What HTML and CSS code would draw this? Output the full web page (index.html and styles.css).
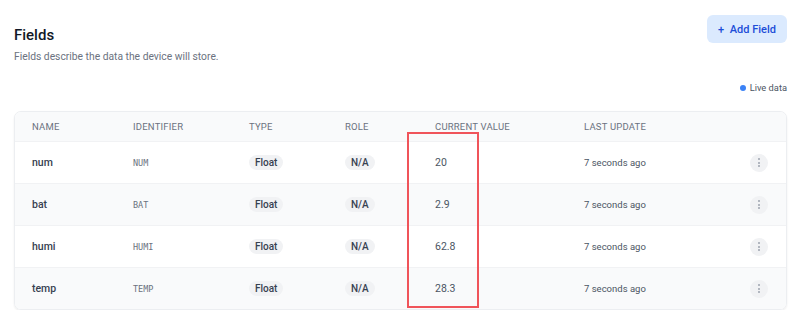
FILE: index.html
```html
<!DOCTYPE html>
<html lang="en">
  <head>
    <meta charset="utf-8" />
    <meta name="viewport" content="width=device-width, initial-scale=1.0" />
    <title>Fields</title>
    <link rel="stylesheet" href="styles.css">
  </head>

  <body>
    <header class="top">
      <div>
        <h1>Fields</h1>
        <p class="sub">Fields describe the data the device will store.</p>
      </div>
      <button class="add-btn"><span class="plus">+</span> Add Field</button>
    </header>

    <div class="live"><span class="dot"></span>Live data</div>

    <section class="table">
      <div class="row head">
        <div>Name</div>
        <div>Identifier</div>
        <div>Type</div>
        <div>Role</div>
        <div>Current value</div>
        <div>Last update</div>
        <div></div>
      </div>

      <div class="row">
        <div class="name">num</div>
        <div class="ident">NUM</div>
        <div><span class="badge">Float</span></div>
        <div><span class="badge">N/A</span></div>
        <div class="value">20</div>
        <div class="time">7 seconds ago</div>
        <div class="act"><span class="kebab"><i></i><i></i><i></i></span></div>
      </div>
      <div class="row">
        <div class="name">bat</div>
        <div class="ident">BAT</div>
        <div><span class="badge">Float</span></div>
        <div><span class="badge">N/A</span></div>
        <div class="value">2.9</div>
        <div class="time">7 seconds ago</div>
        <div class="act"><span class="kebab"><i></i><i></i><i></i></span></div>
      </div>
      <div class="row">
        <div class="name">humi</div>
        <div class="ident">HUMI</div>
        <div><span class="badge">Float</span></div>
        <div><span class="badge">N/A</span></div>
        <div class="value">62.8</div>
        <div class="time">7 seconds ago</div>
        <div class="act"><span class="kebab"><i></i><i></i><i></i></span></div>
      </div>
      <div class="row">
        <div class="name">temp</div>
        <div class="ident">TEMP</div>
        <div><span class="badge">Float</span></div>
        <div><span class="badge">N/A</span></div>
        <div class="value">28.3</div>
        <div class="time">7 seconds ago</div>
        <div class="act"><span class="kebab"><i></i><i></i><i></i></span></div>
      </div>

      <!-- highlight round the value column -->
      <div class="mark"></div>
    </section>
  </body>
</html>
```

FILE: styles.css
```css
body {
  margin: 0;
  padding: 15px 13px 0 14px;
  font-family: Roboto, "Liberation Sans", sans-serif;
  color: #1f2937;
  background: #fff;
}

.top {
  display: flex;
  justify-content: space-between;
  align-items: flex-start;
}

h1 {
  margin: 11px 0 0;
  font-size: 15px;
  font-weight: 500;
  color: #111827;
  line-height: 18px;
}

.sub {
  margin: 6px 0 0;
  font-size: 10.3px;
  color: #6b7280;
  line-height: 14px;
}

.add-btn {
  background-color: #dbeafe;
  border: none;
  border-radius: 6px;
  color: #1d4ed8;
  font-family: inherit;
  font-size: 11px;
  font-weight: 500;
  height: 28px;
  width: 80px;
  padding: 0;
}

.plus {
  margin-right: 3px;
}

.live {
  display: flex;
  justify-content: flex-end;
  align-items: center;
  font-size: 9.3px;
  color: #4b5563;
  margin-top: 17px;
  height: 13px;
}

.dot {
  width: 6px;
  height: 6px;
  border-radius: 50%;
  background: #3b82f6;
  margin-right: 4px;
}

.table {
  position: relative;
  margin-top: 17px;
  border: 1px solid #eceef1;
  border-radius: 7px;
  overflow: hidden;
  box-shadow: 0 1px 2px rgba(0, 0, 0, 0.08);
}

.row {
  display: grid;
  grid-template-columns: 101px 116px 96px 90px 149px 1fr auto;
  height: 42px;
  align-items: center;
  border-top: 1px solid #f1f2f4;
  box-sizing: border-box;
}

.row > div {
  padding-left: 17px;
  display: flex;
  align-items: center;
}

.row:nth-child(odd) {
  background: #f9fafb;
}

.head {
  height: 29px;
  border-top: none;
  font-size: 9.5px;
  text-transform: uppercase;
  letter-spacing: 0.2px;
  color: #6b7280;
}

.name {
  font-size: 10.5px;
  font-weight: 500;
  color: #374151;
}

.ident {
  font-family: "DejaVu Sans Mono", monospace;
  font-size: 8.5px;
  color: #6b7280;
}

.badge {
  display: inline-block;
  background: #f1f2f4;
  border-radius: 8px;
  padding: 0 6px;
  height: 15px;
  line-height: 15px;
  font-size: 10px;
  font-weight: 500;
  color: #374151;
}

.value {
  font-size: 10.5px;
  color: #4b5563;
}

.time {
  font-size: 9.5px;
  color: #4b5563;
}

.row > .act {
  justify-content: flex-end;
  padding-right: 18px;
}

.kebab {
  width: 18px;
  height: 18px;
  border-radius: 50%;
  background: #f1f2f4;
  display: flex;
  flex-direction: column;
  align-items: center;
  justify-content: center;
  gap: 1.5px;
}

.kebab i {
  width: 2px;
  height: 2px;
  border-radius: 50%;
  background: #9ca3af;
}

.mark {
  position: absolute;
  left: 392px;
  top: 20px;
  width: 68px;
  height: 172px;
  border: 2px solid #f0545a;
}
```
